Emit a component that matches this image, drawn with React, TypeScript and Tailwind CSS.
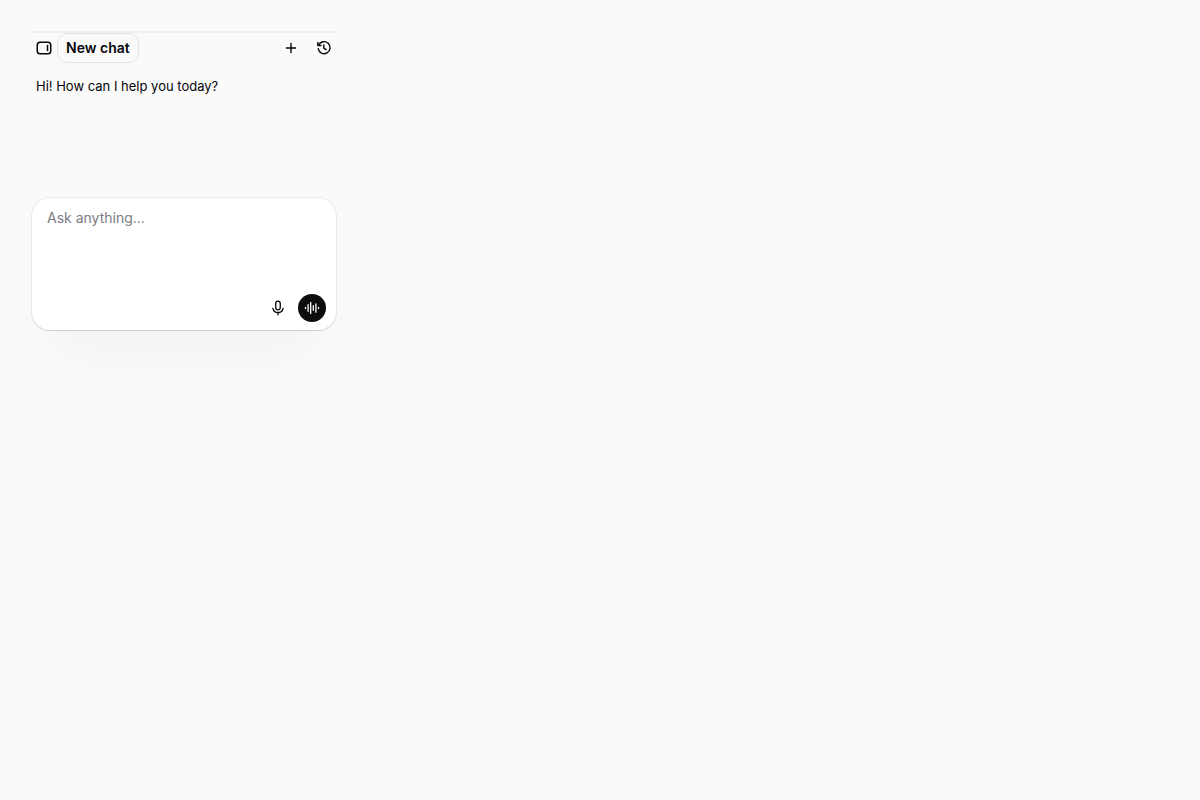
import { clsx } from "clsx";
import type { ButtonHTMLAttributes } from "react";

type IconButtonProps = ButtonHTMLAttributes<HTMLButtonElement> & { label: string };

function IconButton({ label, className, children, ...props }: IconButtonProps) {
  return (
    <button
      type="button"
      aria-label={label}
      className={clsx("flex shrink-0 items-center justify-center rounded-full", className)}
      {...props}
    >
      {children}
    </button>
  );
}

function PanelIcon() {
  return (
    <svg className="h-4 w-4" viewBox="0 0 16 16" fill="none" stroke="currentColor" strokeWidth="1.5" strokeLinecap="round">
      <rect x="1.25" y="2.25" width="13.5" height="11.5" rx="2.75" />
      <path d="M11.5 5.5v5" />
    </svg>
  );
}

function PlusIcon() {
  return (
    <svg className="h-4 w-4" viewBox="0 0 16 16" fill="none" stroke="currentColor" strokeWidth="1.4" strokeLinecap="round">
      <path d="M8 3.4v9.2M3.4 8h9.2" />
    </svg>
  );
}

function HistoryIcon() {
  return (
    <svg
      className="h-4 w-4"
      viewBox="0 0 16 16"
      fill="none"
      stroke="currentColor"
      strokeWidth="1.4"
      strokeLinecap="round"
      strokeLinejoin="round"
    >
      <path d="M2.6 5.3A6 6 0 1 1 2.2 8.7" />
      <path d="M1.8 2.4v3.1h3.2" />
      <path d="M7.8 5v3.2l2.3 1.4" />
    </svg>
  );
}

function MicIcon() {
  return (
    <svg className="h-4 w-4" viewBox="0 0 16 16" fill="none" stroke="currentColor" strokeWidth="1.3" strokeLinecap="round">
      <rect x="5.75" y="1.15" width="4.5" height="8.7" rx="2.25" />
      <path d="M2.9 8.3a5.2 5.2 0 0 0 10.2 0M8 12.5v2.3" />
    </svg>
  );
}

function WaveIcon() {
  return (
    <svg className="h-4 w-4" viewBox="0 0 16 16" fill="none" stroke="currentColor" strokeWidth="1.3" strokeLinecap="round">
      <path d="M1.5 7.4v1.2M4.1 4.7v6.6M6.7 2.5v11M9.3 5.7v4.6M11.9 3.8v8.4M14.5 7.4v1.2" />
    </svg>
  );
}

function ChatHeader() {
  return (
    <header className="flex items-center border-t-2 border-[#efefef] px-1">
      <IconButton label="Toggle sidebar">
        <PanelIcon />
      </IconButton>
      <button
        type="button"
        className="ml-[5px] h-[30px] rounded-[10px] border border-[#e4e4e4] px-2 text-sm font-semibold"
      >
        New chat
      </button>
      <div className="ml-auto flex items-center gap-[17px]">
        <IconButton label="Start new chat">
          <PlusIcon />
        </IconButton>
        <IconButton label="Chat history">
          <HistoryIcon />
        </IconButton>
      </div>
    </header>
  );
}

function Composer() {
  return (
    <form
      className="flex flex-col rounded-[18px] bg-white shadow-[0_0_0_1px_rgba(0,0,0,0.06),0_1px_1px_rgba(0,0,0,0.1),0_36px_56px_-20px_rgba(0,0,0,0.04)]"
      onSubmit={(e) => e.preventDefault()}
    >
      <textarea
        aria-label="Message"
        placeholder="Ask anything..."
        className="h-24 resize-none px-[15px] pt-2.5 text-sm outline-none placeholder:text-[#7c7c84]"
      />
      <div className="flex items-center justify-end gap-3 px-2.5 pb-2">
        <IconButton label="Dictate">
          <MicIcon />
        </IconButton>
        <IconButton label="Start voice mode" className="h-7 w-7 bg-[#0d0d0d] text-white">
          <WaveIcon />
        </IconButton>
      </div>
    </form>
  );
}

export default function App() {
  return (
    <div className="min-h-screen bg-[#fafafa] px-8 pt-[31px] pb-8 font-['Inter',sans-serif] text-[#050507]">
      <main className="w-full max-w-76">
        <ChatHeader />
        <section className="min-h-[135px] px-1 pt-[13px]">
          <p className="text-[13px] leading-5">Hi! How can I help you today?</p>
        </section>
        <Composer />
      </main>
    </div>
  );
}
